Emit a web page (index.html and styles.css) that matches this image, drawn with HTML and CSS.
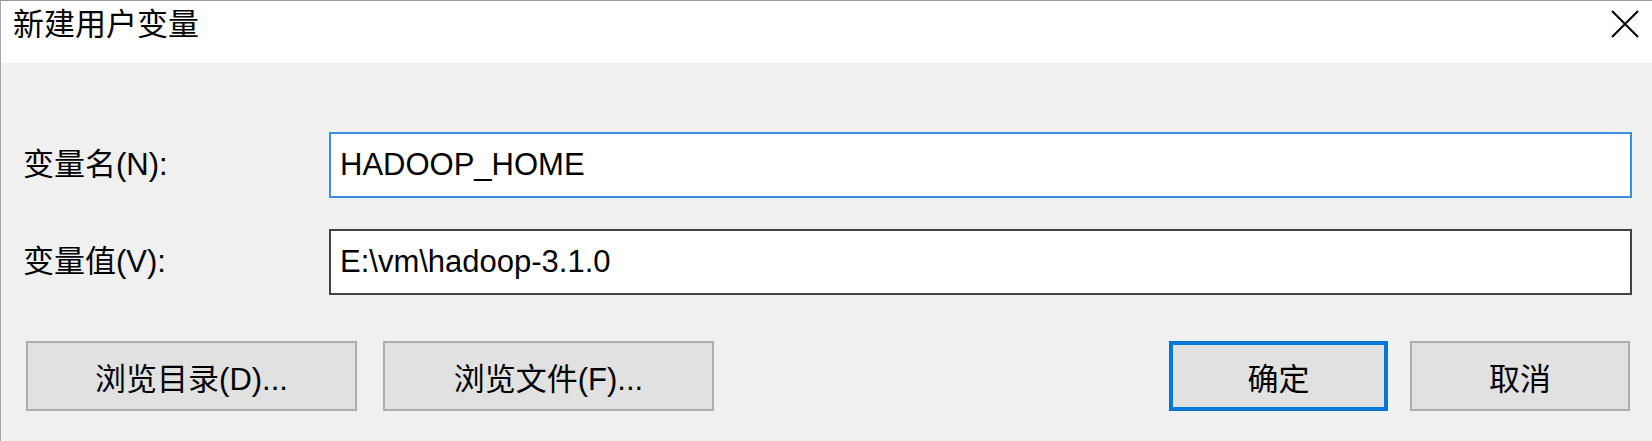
FILE: index.html
```html
<!DOCTYPE html>
<html lang="zh-CN">
<head>
    <meta charset="UTF-8">
    <meta name="viewport" content="width=device-width, initial-scale=1.0">
    <title>新建用户变量</title>
    <link rel="stylesheet" href="styles.css">
</head>
<body>
    <div class="window">
        <div class="titlebar">
            <span class="title">新建用户变量</span>
            <button class="close" aria-label="关闭">
                <svg width="28" height="28" viewBox="0 0 28 28">
                    <path d="M1 1 L27 27 M27 1 L1 27" stroke="#000" stroke-width="2" fill="none"/>
                </svg>
            </button>
        </div>

        <div class="content">
            <div class="fields">
                <label for="var-name">变量名(N):</label>
                <input type="text" id="var-name" class="field focused" value="HADOOP_HOME">

                <label for="var-value">变量值(V):</label>
                <input type="text" id="var-value" class="field" value="E:\vm\hadoop-3.1.0">
            </div>

            <div class="actions">
                <div class="group">
                    <button class="btn browse">浏览目录(D)...</button>
                    <button class="btn browse">浏览文件(F)...</button>
                </div>
                <div class="group right">
                    <button class="btn primary">确定</button>
                    <button class="btn">取消</button>
                </div>
            </div>
        </div>
    </div>
</body>
</html>
```

FILE: styles.css
```css
* {
    box-sizing: border-box;
    margin: 0;
    padding: 0;
}

body {
    font-family: "Liberation Sans", "Noto Sans CJK SC", sans-serif;
    font-size: 31px;
    color: #000;
    background: #f0f0f0;
}

.window {
    height: 441px;
    border-top: 1px solid #9a9a9a;
    border-left: 1px solid #a8a8a8;
    background: #f0f0f0;
}

.titlebar {
    height: 62px;
    background: #fff;
    display: flex;
    justify-content: space-between;
    align-items: flex-start;
    padding: 0 13px 0 12px;
}

.title {
    font-size: 31px;
    line-height: 48px;
}

.close {
    border: none;
    background: none;
    margin-top: 9px;
    width: 28px;
    height: 28px;
}

.content {
    padding: 69px 20px 0 22px;
}

.fields {
    display: grid;
    grid-template-columns: 306px 1fr;
    row-gap: 31px;
    align-items: center;
}

.fields label {
    line-height: 40px;
}

.field {
    height: 66px;
    border: 2px solid #424242;
    background: #fff;
    font-family: inherit;
    font-size: 31px;
    padding: 0 9px;
    outline: none;
    color: #000;
}

.field.focused {
    border-color: #3a8fdf;
}

.actions {
    display: flex;
    justify-content: space-between;
    margin-top: 46px;
    padding-left: 3px;
    padding-right: 2px;
}

.group {
    display: flex;
    gap: 26px;
}

.group.right {
    gap: 22px;
}

.btn {
    height: 70px;
    width: 220px;
    background: #e1e1e1;
    border: 2px solid #adadad;
    font-family: inherit;
    font-size: 31px;
    color: #000;
}

.btn.browse {
    width: 331px;
}

.btn.primary {
    width: 219px;
    border: 4px solid #0078d7;
}
```
